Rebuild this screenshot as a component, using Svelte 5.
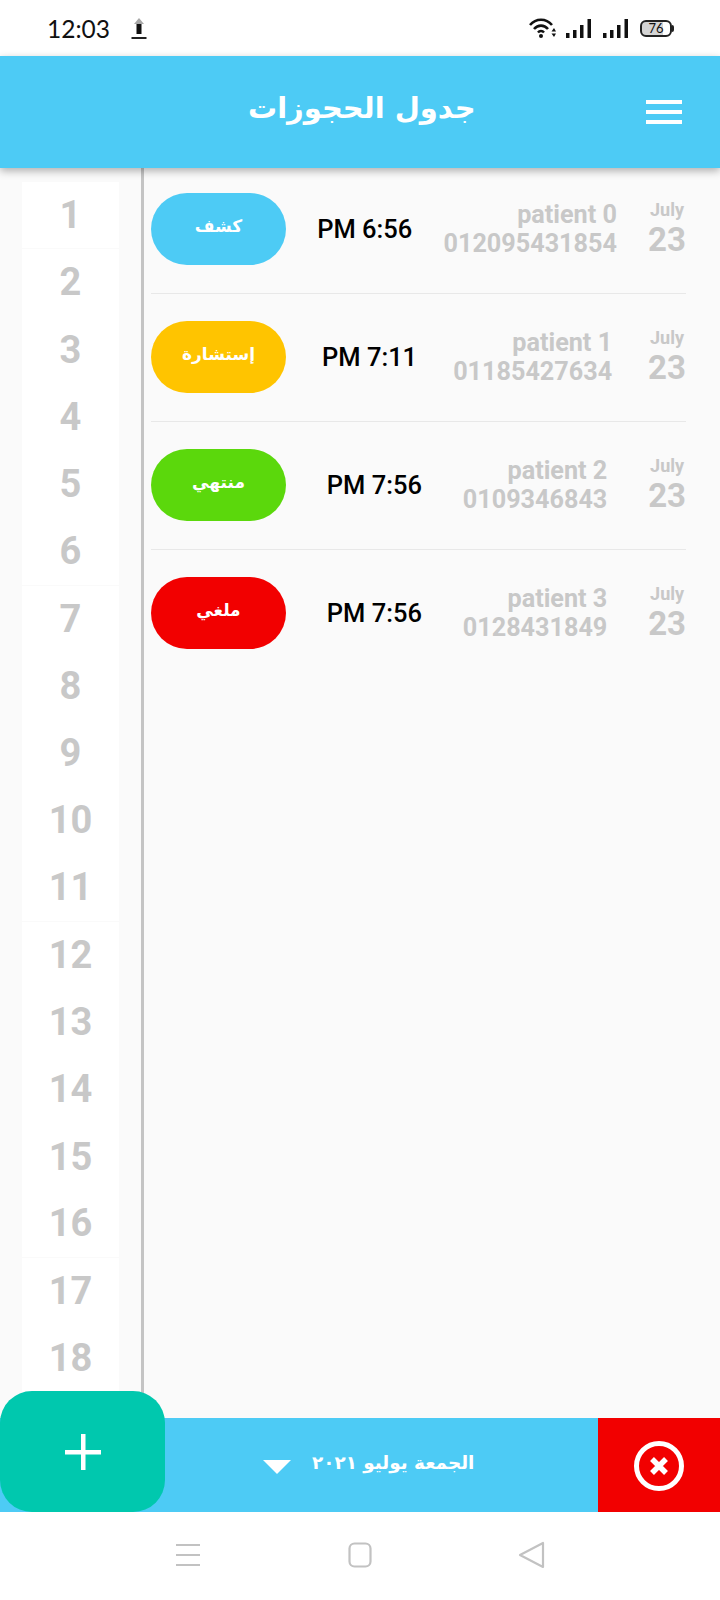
<script>
	const numbers = Array.from({ length: 18 }, (_, i) => i + 1);
	const bookings = [
		{ name: "patient 0", phone: "012095431854", time: "PM 6:56", label: "كشف", color: "#4dcbf5" },
		{ name: "patient 1", phone: "01185427634", time: "PM 7:11", label: "إستشارة", color: "#ffc400" },
		{ name: "patient 2", phone: "0109346843", time: "PM 7:56", label: "منتهي", color: "#5bd80c" },
		{ name: "patient 3", phone: "0128431849", time: "PM 7:56", label: "ملغي", color: "#f20000" }
	];
</script>

<div class="screen">
	<div class="status">
		<span class="clock">12:03</span>
		<svg class="upload" width="16" height="22" viewBox="0 0 16 22">
			<path d="M8 0 L13 6 H3 Z" fill="#a8a8a8" />
			<rect x="5.5" y="6" width="5" height="10" fill="#111" />
			<rect x="0.5" y="19" width="15" height="2" fill="#222" />
		</svg>
		<span class="spacer"></span>
		<svg width="27" height="20" viewBox="0 0 27 20" fill="none" stroke="#111">
			<path d="M1 7 C7 0 17 0 23 7" stroke-width="2.6" />
			<path d="M5 11 C9 6.5 15 6.5 19 11" stroke-width="2.6" />
			<path d="M9 14.5 C10.5 12.5 13.5 12.5 15 14.5" stroke-width="2.4" />
			<circle cx="12" cy="18" r="2" fill="#111" stroke="none" />
			<path d="M25 10 L22.5 13.5 H27 Z M25 19 L22.5 15.5 H27 Z" fill="#111" stroke="none" />
		</svg>
		<svg class="signal" width="25" height="19" viewBox="0 0 25 19" fill="#111">
			<rect x="0" y="14" width="3.5" height="5" />
			<rect x="7" y="11" width="3.5" height="8" />
			<rect x="14" y="6" width="3.5" height="13" />
			<rect x="21.5" y="0" width="3.5" height="19" />
		</svg>
		<svg class="signal2" width="25" height="19" viewBox="0 0 25 19" fill="#111">
			<rect x="0" y="14" width="3.5" height="5" />
			<rect x="7" y="11" width="3.5" height="8" />
			<rect x="14" y="6" width="3.5" height="13" />
			<rect x="21.5" y="0" width="3.5" height="19" />
		</svg>
		<span class="battery">76</span>
		<span class="nub"></span>
	</div>

	<header class="topbar">
		<h1>جدول الحجوزات</h1>
		<div class="burger"><i></i><i></i><i></i></div>
	</header>

	<main class="content">
		<div class="numbers">
			{#each numbers as n}
				<div class="num" class:line={n % 5 === 1}>{n}</div>
			{/each}
		</div>
		<div class="rule"></div>
		<div class="list">
			{#each bookings as b}
				<div class="row">
					<div class="pill" style="background: {b.color}">{b.label}</div>
					<div class="time">{b.time}</div>
					<div class="patient">
						<div>{b.name}</div>
						<div>{b.phone}</div>
					</div>
					<div class="date">
						<div class="month">July</div>
						<div class="day">23</div>
					</div>
				</div>
			{/each}
		</div>
	</main>

	<div class="bottombar">
		<div class="picker">
			<span class="caret"></span>
			<span class="picked">الجمعة يوليو ٢٠٢١</span>
		</div>
		<div class="cancel">
			<svg width="52" height="52" viewBox="0 0 52 52" fill="none" stroke="#fff">
				<circle cx="26" cy="26" r="22.5" stroke-width="5" />
				<path d="M19 19 L33 33 M33 19 L19 33" stroke-width="5.5" />
			</svg>
		</div>
		<div class="fab">
			<svg width="36" height="36" viewBox="0 0 36 36" fill="#fff">
				<rect x="16" y="0" width="4.5" height="36" />
				<rect x="0" y="16" width="36" height="4.5" />
			</svg>
		</div>
	</div>

	<nav class="navbar">
		<svg width="26" height="24" viewBox="0 0 26 24" stroke="#c2c2c2" stroke-width="2">
			<path d="M1 2 H25 M1 12 H25 M1 22 H25" />
		</svg>
		<svg width="24" height="26" viewBox="0 0 24 26" fill="none" stroke="#c2c2c2" stroke-width="2.2">
			<rect x="1.5" y="1.5" width="21" height="23" rx="5" />
		</svg>
		<svg width="27" height="28" viewBox="0 0 27 28" fill="none" stroke="#c2c2c2" stroke-width="2.2" stroke-linejoin="round">
			<path d="M25 2 V26 L2 14 Z" />
		</svg>
	</nav>
</div>

<style>
	:global(body) {
		margin: 0;
		background: #fff;
	}
	.screen {
		width: 720px;
		height: 1600px;
		display: flex;
		flex-direction: column;
		font-family: Roboto, sans-serif;
		overflow: hidden;
	}
	.status {
		height: 56px;
		flex: none;
		display: flex;
		align-items: center;
		padding: 0 46px 0 47px;
		box-sizing: border-box;
		background: #fff;
		color: #111;
	}
	.clock {
		font-family: Lato, sans-serif;
		font-size: 24.5px;
		width: 84px;
	}
	.upload {
		margin-top: 1px;
	}
	.spacer {
		flex: 1;
	}
	.signal {
		margin-left: 10px;
	}
	.signal2 {
		margin-left: 12px;
	}
	.battery {
		margin-left: 12px;
		width: 32px;
		height: 17px;
		box-sizing: border-box;
		border: 2px solid #222;
		border-radius: 6px;
		background: linear-gradient(90deg, #d4d4d4 76%, #fff 76%);
		font-family: Lato, sans-serif;
		font-size: 13px;
		line-height: 13px;
		text-align: center;
	}
	.nub {
		width: 2px;
		height: 7px;
		background: #222;
		border-radius: 0 2px 2px 0;
	}
	.topbar {
		height: 112px;
		flex: none;
		background: #4dcbf5;
		box-shadow: 0 3px 8px rgba(0, 0, 0, 0.3);
		position: relative;
		z-index: 1;
		display: flex;
		align-items: center;
		padding-left: 248px;
		padding-right: 38px;
		justify-content: space-between;
	}
	h1 {
		margin: 0 0 8px;
		color: #fff;
		font-family: "DejaVu Sans", sans-serif;
		font-size: 29px;
		font-weight: 700;
	}
	.burger {
		width: 36px;
		display: flex;
		flex-direction: column;
		gap: 6px;
	}
	.burger i {
		height: 4px;
		background: #fff;
	}
	.content {
		flex: 1;
		display: flex;
		background: #fafafa;
		min-height: 0;
		overflow: hidden;
	}
	.numbers {
		width: 97px;
		margin: 14px 0 0 22px;
		background: #fff;
		flex: none;
	}
	.num {
		height: 67.25px;
		box-sizing: border-box;
		display: flex;
		align-items: center;
		justify-content: center;
		padding-bottom: 1px;
		font-size: 38px;
		font-weight: 700;
		color: #c8c8c8;
	}
	.num.line {
		border-bottom: 1px solid #fafafa;
	}
	.rule {
		width: 3px;
		margin-left: 22px;
		flex: none;
		background: #c4c4c4;
	}
	.list {
		width: 535px;
		margin-left: 7px;
		flex: none;
	}
	.row {
		display: flex;
		justify-content: space-between;
		align-items: center;
		padding: 27px 0 28px;
		border-bottom: 1px solid #e8e8e8;
	}
	.row:first-child {
		padding-top: 25px;
	}
	.row:last-child {
		border-bottom: none;
	}
	.pill {
		width: 135px;
		height: 72px;
		border-radius: 36px;
		display: flex;
		align-items: center;
		justify-content: center;
		color: #fff;
		font-family: "DejaVu Sans", sans-serif;
		font-size: 17px;
		font-weight: 700;
		padding-bottom: 6px;
		box-sizing: border-box;
	}
	.time {
		font-size: 25.5px;
		font-weight: 500;
		color: #000;
	}
	.patient {
		text-align: right;
		font-size: 25.2px;
		line-height: 29px;
		font-weight: 700;
		color: #c8c8c8;
	}
	.date {
		text-align: center;
		font-weight: 700;
		color: #c8c8c8;
	}
	.month {
		font-size: 18px;
		line-height: 22px;
	}
	.day {
		font-size: 33px;
		line-height: 38px;
	}
	.bottombar {
		height: 94px;
		flex: none;
		display: flex;
		position: relative;
		z-index: 2;
	}
	.picker {
		flex: 1;
		background: #4dcbf5;
		display: flex;
		align-items: center;
		padding-left: 263px;
		gap: 21px;
		padding-bottom: 6px;
	}
	.caret {
		width: 0;
		height: 0;
		border-left: 14px solid transparent;
		border-right: 14px solid transparent;
		border-top: 14px solid #fff;
		margin-top: 10px;
	}
	.picked {
		color: #fff;
		font-family: "DejaVu Sans", sans-serif;
		font-size: 18.4px;
		font-weight: 700;
	}
	.cancel {
		width: 122px;
		background: #f20000;
		display: flex;
		align-items: center;
		justify-content: center;
		padding-top: 2px;
		box-sizing: border-box;
	}
	.fab {
		position: absolute;
		left: 0;
		bottom: 0;
		width: 165px;
		height: 121px;
		border-radius: 32px;
		background: #00c8ae;
		display: flex;
		align-items: center;
		justify-content: center;
	}
	.navbar {
		height: 88px;
		flex: none;
		background: #fff;
		display: flex;
		align-items: center;
		padding-left: 175px;
		padding-bottom: 2px;
		box-sizing: border-box;
		gap: 146.5px;
	}
</style>
